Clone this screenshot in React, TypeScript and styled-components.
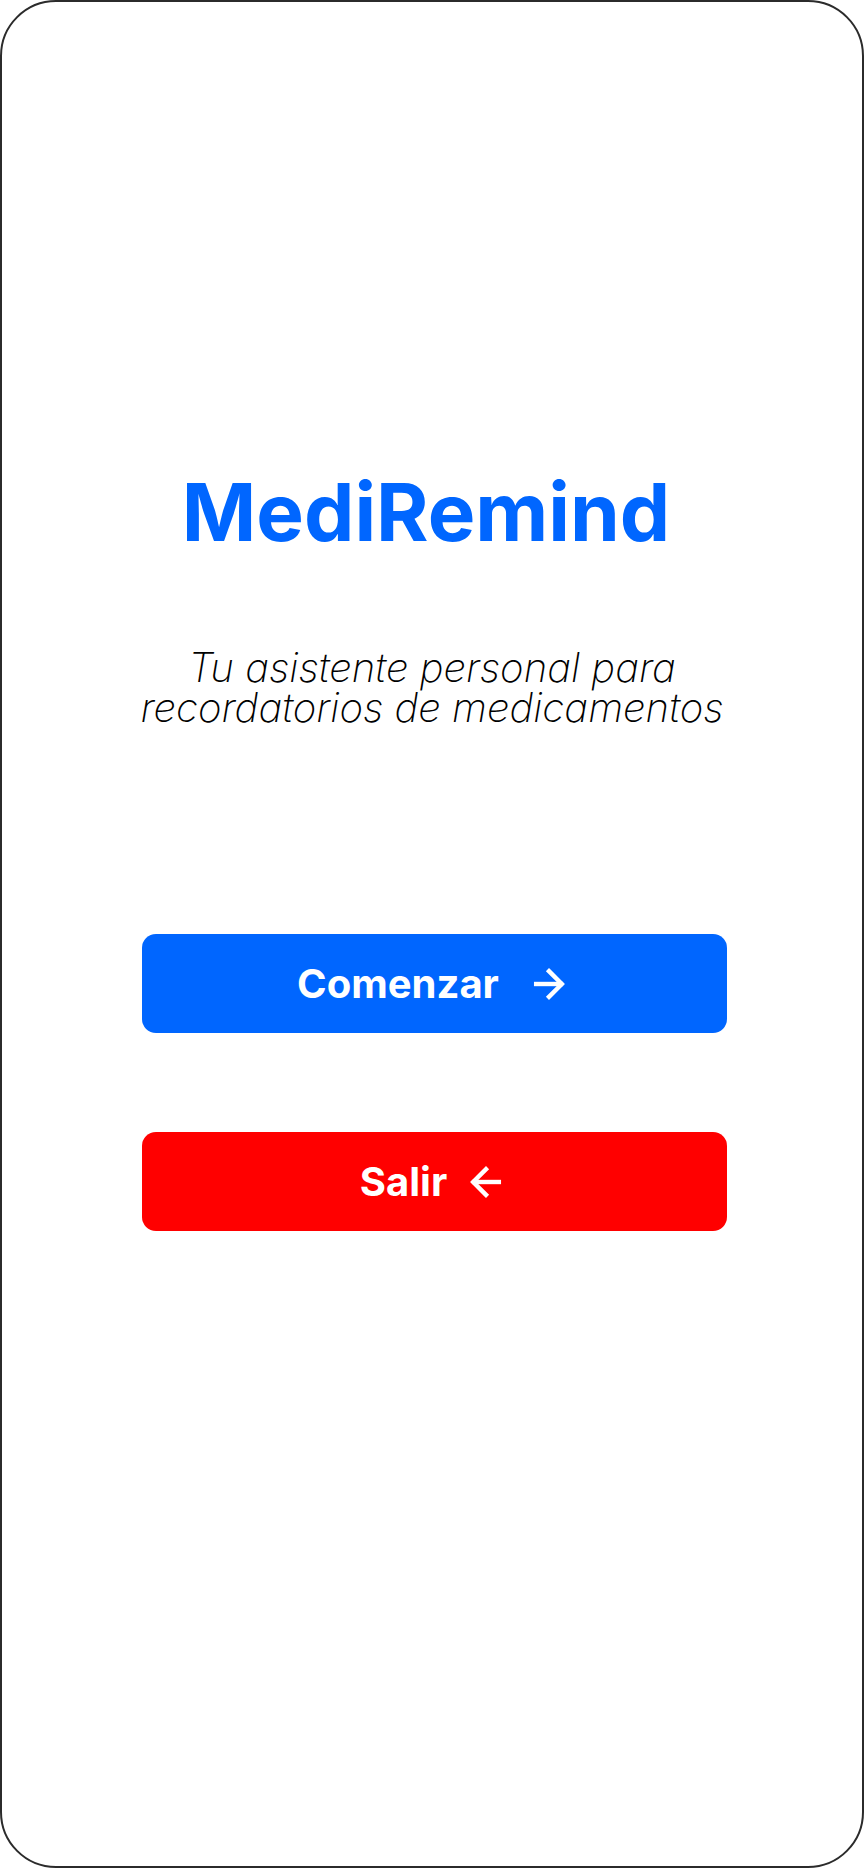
import React from "react";
import styled, { createGlobalStyle } from "styled-components";

const Global = createGlobalStyle`
  html, body { margin: 0; padding: 0; background: #ffffff; }
  body { font-family: Inter, "Noto Sans", sans-serif; }
  * { box-sizing: border-box; }
`;

const Frame = styled.div`
  width: 864px;
  height: 1868px;
  border: 2px solid #2b2b2b;
  border-radius: 56px;
  background: #ffffff;
  display: flex;
  flex-direction: column;
  align-items: center;
  padding-top: 470px;
  overflow: hidden;
`;

const Title = styled.h1`
  margin: 0 12px 0 0;
  font-family: Inter, sans-serif;
  font-weight: 700;
  font-size: 80px;
  line-height: 80px;
  color: #0066ff;
  letter-spacing: 0;
`;

const Subtitle = styled.p`
  margin: 96px 0 0;
  font-family: Inter, sans-serif;
  font-weight: 200;
  font-style: italic;
  font-size: 40.2px;
  line-height: 40px;
  color: #000000;
  text-align: center;
`;

const Actions = styled.div`
  margin: 206px 0 0 4px;
  display: flex;
  flex-direction: column;
  gap: 99px;
  width: 585px;
`;

const ActionButton = styled.button<{ $bg: string; $gap: number }>`
  height: 99px;
  width: 100%;
  border: none;
  border-radius: 14px;
  background: ${(p) => p.$bg};
  color: #ffffff;
  display: flex;
  align-items: center;
  justify-content: center;
  gap: ${(p) => p.$gap}px;
  font-family: Inter, sans-serif;
  font-weight: 700;
  font-size: 40px;
  cursor: pointer;
  padding: 0;
`;

const ArrowIcon = ({ dir }: { dir: "left" | "right" }) => (
  <svg width="44" height="44" viewBox="0 0 24 24" fill="none" stroke="#ffffff" strokeWidth="2.4" strokeLinecap="square" strokeLinejoin="miter">
    {dir === "right" ? (
      <>
        <path d="M5 12h13.5" />
        <path d="M12 5l7 7-7 7" />
      </>
    ) : (
      <>
        <path d="M19 12H5.5" />
        <path d="M12 19l-7-7 7-7" />
      </>
    )}
  </svg>
);

export default function App() {
  return (
    <>
      <Global />
      <Frame>
        <Title>MediRemind</Title>
        <Subtitle>
          Tu asistente personal para
          <br />
          recordatorios de medicamentos
        </Subtitle>
        <Actions>
          <ActionButton $bg="#0066ff" $gap={28}>
            <span>Comenzar</span>
            <ArrowIcon dir="right" />
          </ActionButton>
          <ActionButton $bg="#ff0000" $gap={17}>
            <span>Salir</span>
            <ArrowIcon dir="left" />
          </ActionButton>
        </Actions>
      </Frame>
    </>
  );
}
